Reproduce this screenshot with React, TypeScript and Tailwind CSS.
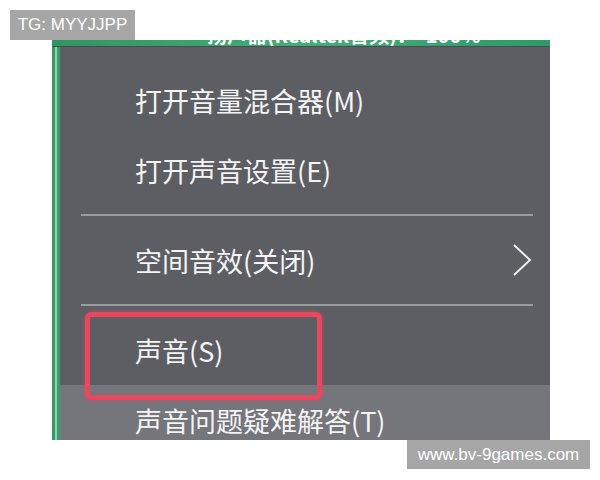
import { ReactNode } from "react";

const cjk = "font-['Noto_Sans_CJK_SC','Noto_Sans',sans-serif]";

function MenuItem({ label, hovered, right }: { label: string; hovered?: boolean; right?: ReactNode }) {
    return (
        <div className={`flex h-[70px] shrink-0 flex-row items-center justify-between pl-[75px] pr-[18px] ${hovered ? "bg-[#75767c]" : ""}`}>
            <span className={`${cjk} text-[27px] leading-none text-[#f4f4f4]`}>{label}</span>
            {right}
        </div>
    );
}

function Separator() {
    return (
        <div className="shrink-0 py-[9px] pl-[21px] pr-[17px]">
            <div className="h-[2px] bg-[#9a9ba0]" />
        </div>
    );
}

export default function App() {
    return (
        <div className="relative h-[480px] w-[600px] overflow-hidden bg-white pl-[52px] pt-[40px]">
            {/* photo of the windows menu */}
            <div className="flex h-[400px] w-[498px] flex-col overflow-hidden bg-gradient-to-b from-[#3c9d6b] to-[#2d8c86]">
                <div className="h-[7px] shrink-0 overflow-hidden border-b border-[#4a4b50] bg-gradient-to-r from-[#2f9660] via-[#45ad78] to-[#2f9a68] pl-[155px]">
                    <div className={`${cjk} -mt-[15px] whitespace-nowrap text-[20px] font-bold leading-[20px] text-white`}>
                        扬声器(Realtek音频)：&nbsp;&nbsp;100%
                    </div>
                </div>
                <div className="flex min-h-0 flex-1 flex-row">
                    <div className="flex w-[8px] shrink-0 flex-row">
                        <div className="w-[3px] bg-[#3a9868]" />
                        <div className="w-[2px] bg-[#8dd3ae]" />
                        <div className="w-[3px] bg-[#3c9c6e]" />
                    </div>
                    <div className="flex flex-1 flex-col bg-[#5d5e63] pt-[18px]">
                        <MenuItem label="打开音量混合器(M)" />
                        <MenuItem label="打开声音设置(E)" />
                        <Separator />
                        <MenuItem
                            label="空间音效(关闭)"
                            right={
                                <svg width="20" height="32" viewBox="0 0 20 32" fill="none">
                                    <polyline points="2,1 18,16 2,31" stroke="#ececec" strokeWidth="2" />
                                </svg>
                            }
                        />
                        <Separator />
                        <MenuItem label="声音(S)" />
                        <MenuItem label="声音问题疑难解答(T)" hovered />
                    </div>
                </div>
            </div>

            {/* red highlight drawn over the screenshot */}
            <div className="absolute left-[85px] top-[312px] h-[88px] w-[237px] rounded-[6px] border-[5px] border-[#e8475d] shadow-[0_0_4px_rgba(232,71,93,0.6)]" />

            {/* watermarks */}
            <div className="absolute left-[10px] top-[10px] flex h-[30px] w-[125px] items-center justify-center bg-[#a6a6a6] font-['Liberation_Sans',Arial,sans-serif] text-[17px] text-white">
                TG: MYYJJPP
            </div>
            <div className="absolute left-[407px] top-[440px] flex h-[29px] w-[183px] items-center justify-center bg-[#a6a6a6] font-['Liberation_Sans',Arial,sans-serif] text-[17px] text-white">
                www.bv-9games.com
            </div>
        </div>
    );
}
